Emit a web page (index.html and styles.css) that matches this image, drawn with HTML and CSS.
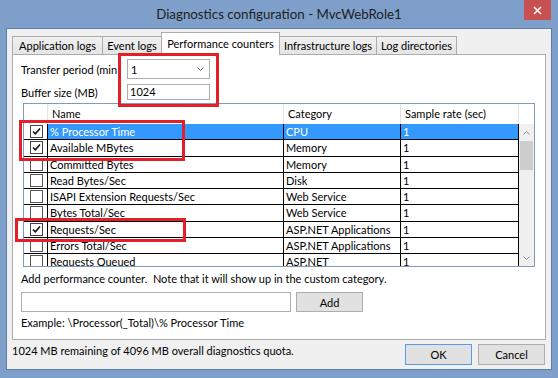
FILE: index.html
```html
<!DOCTYPE html>
<html>
<head>
<meta charset="utf-8">
<link rel="stylesheet" href="styles.css">
</head>
<body>
<div class="window">
  <div class="titlebar">
    <span></span>
    <div class="title">Diagnostics configuration - MvcWebRole1</div>
    <div class="close-wrap">
      <div class="close"><svg width="9" height="9" viewBox="0 0 9 9"><path d="M1 1 8 8M8 1 1 8" stroke="#fff" stroke-width="1.5"/></svg></div>
    </div>
  </div>
  <div class="client">
    <div class="tabs">
      <div class="tab t1">Application logs</div>
      <div class="tab t2">Event logs</div>
      <div class="tab sel t3">Performance counters</div>
      <div class="tab t4">Infrastructure logs</div>
      <div class="tab t5">Log directories</div>
    </div>
    <div class="panel">
      <div class="form-row">
        <div class="lbl">Transfer period (min</div>
        <div class="combo"><span>1</span><svg width="7" height="4" viewBox="0 0 7 4"><path d="M0.5 0.5 3.5 3.5 6.5 0.5" fill="none" stroke="#666" stroke-width="1"/></svg></div>
      </div>
      <div class="form-row r2">
        <div class="lbl">Buffer size (MB)</div>
        <div class="textbox">1024</div>
      </div>
      <div class="grid">
        <div class="ghead">
          <div></div>
          <div>Name</div>
          <div>Category</div>
          <div>Sample rate (sec)</div>
          <div class="hspace"></div>
        </div>
        <div class="gbody">
          <div class="rows">
            <div class="row sel">
              <div class="cb"><svg width="13" height="13" viewBox="0 0 13 13"><rect x="0.5" y="0.5" width="12" height="12" fill="#fff" stroke="#444"/><path d="M3 6.5 5.3 8.8 10 3.5" fill="none" stroke="#111" stroke-width="1.6"/></svg></div>
              <div>% Processor Time</div><div>CPU</div><div>1</div>
            </div>
            <div class="row">
              <div class="cb"><svg width="13" height="13" viewBox="0 0 13 13"><rect x="0.5" y="0.5" width="12" height="12" fill="#fff" stroke="#444"/><path d="M3 6.5 5.3 8.8 10 3.5" fill="none" stroke="#111" stroke-width="1.6"/></svg></div>
              <div>Available MBytes</div><div>Memory</div><div>1</div>
            </div>
            <div class="row">
              <div class="cb"><svg width="13" height="13" viewBox="0 0 13 13"><rect x="0.5" y="0.5" width="12" height="12" fill="#fff" stroke="#555"/></svg></div>
              <div>Committed Bytes</div><div>Memory</div><div>1</div>
            </div>
            <div class="row">
              <div class="cb"><svg width="13" height="13" viewBox="0 0 13 13"><rect x="0.5" y="0.5" width="12" height="12" fill="#fff" stroke="#555"/></svg></div>
              <div>Read Bytes/Sec</div><div>Disk</div><div>1</div>
            </div>
            <div class="row">
              <div class="cb"><svg width="13" height="13" viewBox="0 0 13 13"><rect x="0.5" y="0.5" width="12" height="12" fill="#fff" stroke="#555"/></svg></div>
              <div>ISAPI Extension Requests/Sec</div><div>Web Service</div><div>1</div>
            </div>
            <div class="row">
              <div class="cb"><svg width="13" height="13" viewBox="0 0 13 13"><rect x="0.5" y="0.5" width="12" height="12" fill="#fff" stroke="#555"/></svg></div>
              <div>Bytes Total/Sec</div><div>Web Service</div><div>1</div>
            </div>
            <div class="row">
              <div class="cb"><svg width="13" height="13" viewBox="0 0 13 13"><rect x="0.5" y="0.5" width="12" height="12" fill="#fff" stroke="#444"/><path d="M3 6.5 5.3 8.8 10 3.5" fill="none" stroke="#111" stroke-width="1.6"/></svg></div>
              <div>Requests/Sec</div><div>ASP.NET Applications</div><div>1</div>
            </div>
            <div class="row">
              <div class="cb"><svg width="13" height="13" viewBox="0 0 13 13"><rect x="0.5" y="0.5" width="12" height="12" fill="#fff" stroke="#555"/></svg></div>
              <div>Errors Total/Sec</div><div>ASP.NET Applications</div><div>1</div>
            </div>
            <div class="row">
              <div class="cb"><svg width="13" height="13" viewBox="0 0 13 13"><rect x="0.5" y="0.5" width="12" height="12" fill="#fff" stroke="#555"/></svg></div>
              <div>Requests Queued</div><div>ASP.NET</div><div>1</div>
            </div>
          </div>
          <div class="vscroll">
            <div class="sb-btn"><svg width="7" height="4" viewBox="0 0 7 4"><path d="M0.5 3.5 3.5 0.5 6.5 3.5" fill="none" stroke="#8a8a8a" stroke-width="1"/></svg></div>
            <div class="thumb"></div>
            <div class="track"></div>
            <div class="sb-btn"><svg width="7" height="4" viewBox="0 0 7 4"><path d="M0.5 0.5 3.5 3.5 6.5 0.5" fill="none" stroke="#8a8a8a" stroke-width="1"/></svg></div>
          </div>
        </div>
      </div>
      <div class="note">Add performance counter.&nbsp; Note that it will show up in the custom category.</div>
      <div class="addrow">
        <div class="addinput"></div>
        <div class="btn">Add</div>
      </div>
      <div class="example">Example: \Processor(_Total)\% Processor Time</div>
      <div class="hl hl1"></div>
      <div class="hl hl2"></div>
      <div class="hl hl3"></div>
    </div>
    <div class="footer">
      <div class="quota">1024 MB remaining of 4096 MB overall diagnostics quota.</div>
      <div class="btn fbtn ok">OK</div>
      <div class="btn fbtn">Cancel</div>
    </div>
  </div>
</div>
</body>
</html>
```
FILE: styles.css
```css
* { box-sizing: border-box; }
html, body { margin: 0; padding: 0; }
body {
  width: 558px;
  height: 378px;
  overflow: hidden;
  background: #7d9fc9;
  font-family: Lato, "Liberation Sans", sans-serif;
  font-size: 11px;
  color: #000;
}
.window { display: flex; flex-direction: column; height: 378px; }

.titlebar {
  height: 28px;
  display: grid;
  grid-template-columns: 1fr auto 1fr;
  align-items: start;
}
.title {
  font-size: 13.3px;
  line-height: 28px;
  color: #1e1e1e;
  white-space: nowrap;
}
.close-wrap { justify-self: end; margin-right: 7px; }
.close {
  width: 27px;
  height: 20px;
  background: #c75050;
  display: flex;
  align-items: center;
  justify-content: center;
}

.client {
  flex: 1;
  margin: 0 6px 8px;
  background: #f0f0f0;
  border: 1px solid #5d7ea8;
  display: flex;
  flex-direction: column;
}

.tabs {
  display: flex;
  align-items: flex-end;
  height: 25px;
  padding: 3px 0 0 5px;
}
.tab {
  height: 18px;
  border: 1px solid #acacac;
  border-bottom: 0;
  background: linear-gradient(#f0f0f0, #e5e5e5);
  display: flex;
  align-items: center;
  justify-content: center;
  margin-left: -1px;
  white-space: nowrap;
}
.tab.t1 { margin-left: 0; width: 91px; }
.tab.t2 { width: 60px; }
.tab.t3 { width: 119px; }
.tab.t4 { width: 98px; }
.tab.t5 { width: 81px; }
.tab.sel {
  height: 23px;
  margin-bottom: -1px;
  background: #fff;
  position: relative;
  z-index: 1;
  padding-bottom: 2px;
}

.panel {
  position: relative;
  height: 286px;
  margin: 0 5px;
  border: 1px solid #acacac;
  background: #fff;
  padding: 4px 0 0 8px;
  display: flex;
  flex-direction: column;
}
.form-row { display: flex; align-items: center; }
.form-row.r2 { margin-top: 5px; }
.lbl { width: 106px; white-space: nowrap; }
.combo {
  width: 83px;
  height: 20px;
  border: 1px solid #abadb3;
  background: #fff;
  display: flex;
  align-items: center;
  justify-content: space-between;
  padding: 0 5px 0 3px;
}
.textbox {
  width: 83px;
  height: 16px;
  border: 1px solid #abadb3;
  background: #fff;
  padding-left: 2px;
  line-height: 14px;
}

.grid {
  margin: 3px 0 0 2px;
  width: 512px;
  height: 164px;
  border: 1px solid #7f9db9;
  display: flex;
  flex-direction: column;
}
.ghead {
  display: grid;
  grid-template-columns: 24px 236px 117px 118px 15px;
  height: 20px;
  background: #fff;
}
.ghead > div {
  border-right: 1px solid #e3e3e3;
  padding-left: 4px;
  line-height: 20px;
  white-space: nowrap;
}
.ghead > .hspace { border-right: 0; }
.gbody { display: flex; flex: 1; min-height: 0; }
.rows { width: 495px; overflow: hidden; }
.row {
  display: grid;
  grid-template-columns: 24px 236px 117px 118px;
  height: 16.25px;
}
.row > div {
  border-right: 1px solid #000;
  border-bottom: 1px solid #000;
  padding-left: 2px;
  line-height: 15px;
  white-space: nowrap;
  overflow: hidden;
}
.row > .cb {
  display: flex;
  align-items: center;
  padding-left: 6px;
  background: #fff;
}
.row.sel > div:not(.cb) { background: #3399ff; color: #fff; }

.vscroll {
  width: 15px;
  background: #f0f0f0;
  display: flex;
  flex-direction: column;
}
.sb-btn {
  height: 17px;
  display: flex;
  align-items: center;
  justify-content: center;
}
.thumb { height: 29px; margin: 0 1px; background: #cdcdcd; }
.track { flex: 1; }

.note { margin-top: 5px; line-height: 14px; white-space: nowrap; }
.addrow { display: flex; gap: 5px; margin-top: 6px; }
.addinput {
  width: 270px;
  height: 20px;
  border: 1px solid #abadb3;
  background: #fff;
}
.btn {
  width: 67px;
  height: 20px;
  border: 1px solid #adadad;
  background: #e1e1e1;
  display: flex;
  align-items: center;
  justify-content: center;
}
.example { margin-top: 4px; line-height: 14px; white-space: nowrap; }

.hl {
  position: absolute;
  border: 3px solid #e3202a;
  z-index: 5;
}
.hl1 { left: 105px; top: -2px; width: 101px; height: 54px; }
.hl2 { left: 6px; top: 65px; width: 166px; height: 41px; }
.hl3 { left: 2px; top: 163px; width: 171px; height: 24px; }

.footer {
  flex: 1;
  display: flex;
  align-items: flex-start;
  padding: 4px 6px 0 5px;
}
.quota { flex: 1; line-height: 14px; white-space: nowrap; }
.fbtn { height: 21px; }
.ok { border-color: #569de5; margin-right: 6px; }
```
